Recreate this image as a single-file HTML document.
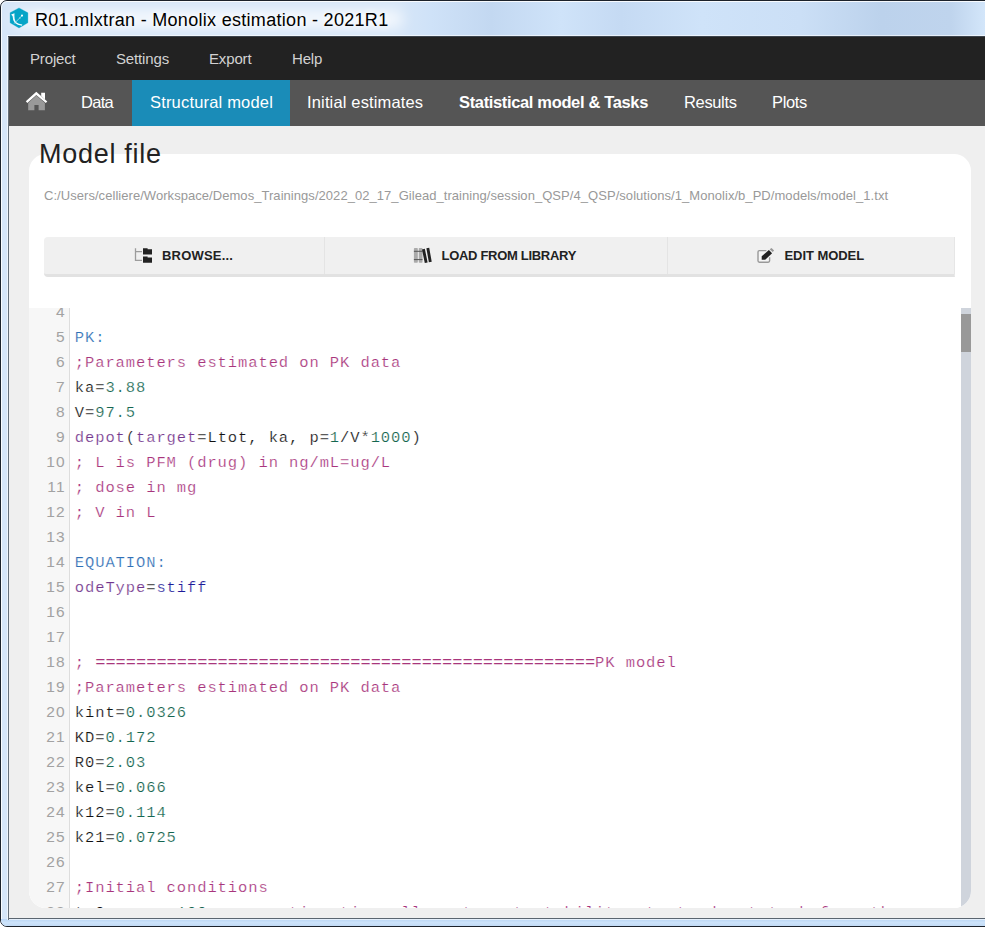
<!DOCTYPE html>
<html>
<head>
<meta charset="utf-8">
<title>R01.mlxtran - Monolix estimation - 2021R1</title>
<style>
*{box-sizing:border-box;margin:0;padding:0}
html,body{width:985px;height:927px;overflow:hidden;background:#fff}
body{font-family:"Liberation Sans",sans-serif;position:relative}
.abs{position:absolute}
#win{position:absolute;left:0;top:0;width:1000px;height:927px;border:1px solid #1c222b;border-radius:7px 0 0 7px;
 background:linear-gradient(90deg,#d6e6f8 0,#d6e6f8 400px,#cfe2f8 430px,#c3d8f1 490px,#cfe3f9 560px,#c5daf3 620px,#cfe3f9 700px,#cbdff6 800px,#bcd2ec 880px,#bfd4ed 950px,#d3e6fa 984px);overflow:hidden}
#win:before{content:"";position:absolute;left:0;top:0;right:0;bottom:0;border:1px solid rgba(255,255,255,.85);border-radius:6px 0 0 6px}
#client{position:absolute;left:7px;top:35px;width:1000px;height:883px;background:#efefef;border-bottom:1px solid #5a6570;border-top:1px solid #3c444d;box-shadow:0 0 0 1px rgba(255,255,255,.6);z-index:2}
#lborder{position:absolute;left:0;top:0;width:1px;height:883px;background:#66707a;z-index:5}
#glow{position:absolute;left:12px;top:9px;width:390px;height:18px;background:rgba(255,255,255,.75);filter:blur(7px);border-radius:9px}
#bframe{position:absolute;left:0;top:918px;width:1000px;height:7px;background:linear-gradient(180deg,#b9d5f4 0,#cde3fa 50%,#c2dbf6 100%)}
#title{position:absolute;left:34px;top:7.6px;font-size:18px;line-height:22px;color:#000;white-space:nowrap;letter-spacing:0.3px;text-shadow:0 0 6px #fff,0 0 10px #fff}
#menubar{position:absolute;left:0;top:0;width:1000px;height:43px;background:#222}
#menubar span{position:absolute;top:0;line-height:44px;font-size:15px;color:#d2d2d2;white-space:nowrap;letter-spacing:-0.15px}
#tabbar{position:absolute;left:0;top:43px;width:1000px;height:45.5px;background:#555}
#tabbar span{position:absolute;top:0;line-height:45px;font-size:16.5px;color:#fff;white-space:nowrap;letter-spacing:-0.35px}
#tabactive{position:absolute;left:123.7px;top:0;width:158.3px;height:45.5px;background:#1a8cb8}
#panel{position:absolute;left:21px;top:117.2px;width:941.6px;height:754.2px;background:#fff;border-radius:17px;overflow:hidden}
#h1{position:absolute;left:31px;top:99.4px;font-size:27px;line-height:36px;color:#222;white-space:nowrap;letter-spacing:0.72px}
#path{position:absolute;left:15px;top:34.3px;font-size:13px;line-height:16px;color:#999;white-space:nowrap;letter-spacing:0.05px}
#btns{position:absolute;left:15px;top:82.8px;width:911.3px;height:40.4px;background:#f0f0f0;border-bottom:3.4px solid #e2e2e2;border-right:1px solid #e6e6e6;border-radius:4px 0 0 4px}
#btns .sep{position:absolute;top:0;width:1px;height:37px;background:#e4e4e4}
#btns .lbl{position:absolute;top:0;line-height:37px;font-size:13px;font-weight:bold;color:#222;white-space:nowrap}
#editor{position:absolute;left:0;top:154px;width:942px;height:601px;overflow:hidden;background:#fff}
#gutter{position:absolute;left:0;top:0;width:41px;height:620px;background:#f7f7f7;border-right:1px solid #ddd}
.ln{position:absolute;left:0;width:36.8px;text-align:right;font-size:15.5px;line-height:25px;color:#a2a2a2;height:25px;letter-spacing:1.2px;margin-top:-1.3px}
.cl{position:absolute;left:45.8px;margin-top:0.4px;-webkit-text-stroke:0.22px #fff;letter-spacing:0.9px;font-family:"Liberation Mono",monospace;font-size:15.5px;line-height:25px;height:25px;color:#111;white-space:pre}
.e{font-size:17px;letter-spacing:0;line-height:10px;-webkit-text-stroke:0.1px #fff}.c{color:#a8357c}.k{color:#2f6fb5}.n{color:#156650}.v{color:#73358c}.a{color:#1d1a99}
#sbtrack{position:absolute;left:931.5px;top:0;width:10.2px;height:620px;background:#cfd4dc}
#sbthumb{position:absolute;left:931.5px;top:6px;width:10.2px;height:38px;background:#999}
</style>
</head>
<body>
<div id="win">
 <div id="glow"></div>
 <svg class="abs" style="left:7px;top:5px" width="22" height="24" viewBox="8 6 22 24">
  <polygon points="19,7.9 27.9,12.8 27.9,22.8 19,28 10.1,22.8 10.1,12.8" fill="#05a4c7" stroke="#05a4c7" stroke-width="0.3" stroke-linejoin="round"/>
  <path d="M11.1 14.4 L14.5 13.2 Q14 19.5 16.2 22.2 Q18.5 24.2 22.4 24.6 L21.8 25.7 Q17.2 25.2 14.9 22.9 Q12.6 20.2 12.6 16.2 Z" fill="#f2fbfd"/>
  <path d="M14.2 23.6 L21.6 16" stroke="#bfe8f1" stroke-width="0.7" fill="none"/>
  <circle cx="19.9" cy="18" r="0.8" fill="#a8e0ec"/>
  <circle cx="22" cy="15.6" r="1.05" fill="#fff"/>
 </svg>
 <div id="bframe"></div>
 <div id="title">R01.mlxtran - Monolix estimation - 2021R1</div>
 <div id="client">
  <div id="lborder"></div>
  <div id="menubar">
   <span style="left:22px">Project</span>
   <span style="left:108px">Settings</span>
   <span style="left:201px">Export</span>
   <span style="left:284px">Help</span>
  </div>
  <div id="tabbar">
   <div id="tabactive"></div>
   <svg class="abs" style="left:16px;top:8px" width="26" height="26" viewBox="0 0 26 26">
    <polygon points="4.2,15.0 12.3,7.6 20.9,15.0 20.9,22.3 14.6,22.3 14.6,17.0 10.4,17.0 10.4,22.3 4.2,22.3" fill="#999"/>
    <polygon points="17.2,4.8 21.0,4.8 21.0,11.4 17.2,8.1" fill="#fff"/>
    <polygon points="1.8,13.2 12.3,3.8 23.3,13.4 21.8,15.1 12.3,6.9 3.3,14.9" fill="#fff"/>
   </svg>
   <span style="left:73px;letter-spacing:-0.7px">Data</span>
   <span style="left:142px;letter-spacing:0.18px">Structural model</span>
   <span style="left:299px;letter-spacing:0.15px">Initial estimates</span>
   <span style="left:451px;font-weight:bold">Statistical model &amp; Tasks</span>
   <span style="left:676px">Results</span>
   <span style="left:764px">Plots</span>
  </div>
  <div id="panel">
   <div id="path">C:/Users/celliere/Workspace/Demos_Trainings/2022_02_17_Gilead_training/session_QSP/4_QSP/solutions/1_Monolix/b_PD/models/model_1.txt</div>
   <div id="btns">
    <div class="sep" style="left:280px"></div>
    <div class="sep" style="left:623px"></div>
    <svg class="abs" style="left:88.0px;top:7.8px" width="24" height="20" viewBox="132 245 24 20"><path d="M135.5 248.2V260.4H142M135.5 251.6H142" stroke="#9c9c9c" stroke-width="1.3" fill="none"/><path d="M143 248.2H147.6V249.2H152V254.5H143Z" fill="#222"/><path d="M143 256.4H147.6V257.4H152V262.8H143Z" fill="#222"/></svg>
    <svg class="abs" style="left:366.0px;top:7.8px" width="26" height="20" viewBox="410 245 26 20"><rect x="413.9" y="247.9" width="3.9" height="14.9" rx="0.8" fill="#aaa"/><rect x="418.8" y="247.9" width="3.7" height="14.9" rx="0.8" fill="#aaa"/><path d="M413.9 251.3H422.5M413.9 259.6H422.5" stroke="#555" stroke-width="1"/><path d="M423.4 249.1L426.2 262.7M427.8 248.1L430.3 262" stroke="#222" stroke-width="2.9"/></svg>
    <svg class="abs" style="left:710.0px;top:7.8px" width="24" height="20" viewBox="754 245 24 20"><path d="M766.4 250.6H759.4Q758 250.6 758 252V260.8Q758 262.2 759.4 262.2H768.2Q769.6 262.2 769.6 260.8V257.2" stroke="#999" stroke-width="1.4" fill="#f5f5f5"/><polygon points="761.7,259.8 761.7,256.3 768.9,250.1 772.1,253.3 765.2,259.8" fill="#222"/><polygon points="769.7,249.3 771.5,247.9 774.1,250.4 772.7,252.1" fill="#999"/></svg>
    <span class="lbl" style="left:118px;letter-spacing:0.2px">BROWSE...</span>
    <span class="lbl" style="left:397.5px;letter-spacing:-0.3px">LOAD FROM LIBRARY</span>
    <span class="lbl" style="left:740.5px;letter-spacing:-0.06px">EDIT MODEL</span>
   </div>
   <div id="editor">
    <div id="gutter"></div>
    <div id="lines">
     <div class="ln" style="top:-8px">4</div>
     <div class="ln" style="top:17px">5</div>
     <div class="cl" style="top:17px"><span class="k">PK:</span></div>
     <div class="ln" style="top:42px">6</div>
     <div class="cl" style="top:42px"><span class="c">;Parameters estimated on PK data</span></div>
     <div class="ln" style="top:67px">7</div>
     <div class="cl" style="top:67px">ka=<span class="n">3.88</span></div>
     <div class="ln" style="top:92px">8</div>
     <div class="cl" style="top:92px">V=<span class="n">97.5</span></div>
     <div class="ln" style="top:117px">9</div>
     <div class="cl" style="top:117px"><span class="v">depot</span>(<span class="v">target</span>=Ltot, ka, p=<span class="n">1</span>/V*<span class="n">1000</span>)</div>
     <div class="ln" style="top:142px">10</div>
     <div class="cl" style="top:142px"><span class="c">; L is PFM (drug) in ng/mL=ug/L</span></div>
     <div class="ln" style="top:167px">11</div>
     <div class="cl" style="top:167px"><span class="c">; dose in mg</span></div>
     <div class="ln" style="top:192px">12</div>
     <div class="cl" style="top:192px"><span class="c">; V in L</span></div>
     <div class="ln" style="top:217px">13</div>
     <div class="ln" style="top:242px">14</div>
     <div class="cl" style="top:242px"><span class="k">EQUATION:</span></div>
     <div class="ln" style="top:267px">15</div>
     <div class="cl" style="top:267px"><span class="v">odeType</span>=<span class="a">stiff</span></div>
     <div class="ln" style="top:292px">16</div>
     <div class="ln" style="top:317px">17</div>
     <div class="ln" style="top:342px">18</div>
     <div class="cl" style="top:342px"><span class="c">; </span><span class="c e">=================================================</span><span class="c">PK model</span></div>
     <div class="ln" style="top:367px">19</div>
     <div class="cl" style="top:367px"><span class="c">;Parameters estimated on PK data</span></div>
     <div class="ln" style="top:392px">20</div>
     <div class="cl" style="top:392px">kint=<span class="n">0.0326</span></div>
     <div class="ln" style="top:417px">21</div>
     <div class="cl" style="top:417px">KD=<span class="n">0.172</span></div>
     <div class="ln" style="top:442px">22</div>
     <div class="cl" style="top:442px">R0=<span class="n">2.03</span></div>
     <div class="ln" style="top:467px">23</div>
     <div class="cl" style="top:467px">kel=<span class="n">0.066</span></div>
     <div class="ln" style="top:492px">24</div>
     <div class="cl" style="top:492px">k12=<span class="n">0.114</span></div>
     <div class="ln" style="top:517px">25</div>
     <div class="cl" style="top:517px">k21=<span class="n">0.0725</span></div>
     <div class="ln" style="top:542px">26</div>
     <div class="ln" style="top:567px">27</div>
     <div class="cl" style="top:567px"><span class="c">;Initial conditions</span></div>
     <div class="ln" style="top:592px">28</div>
     <div class="cl" style="top:592px">t_0    = <span class="n">-100</span>  <span class="c">; negative time allows to get stability at steady state before the</span></div>
    </div>
    <div id="sbtrack"></div>
    <div id="sbthumb"></div>
   </div>
  </div>
  <div id="h1">Model file</div>
 </div>
</div>
</body>
</html>
